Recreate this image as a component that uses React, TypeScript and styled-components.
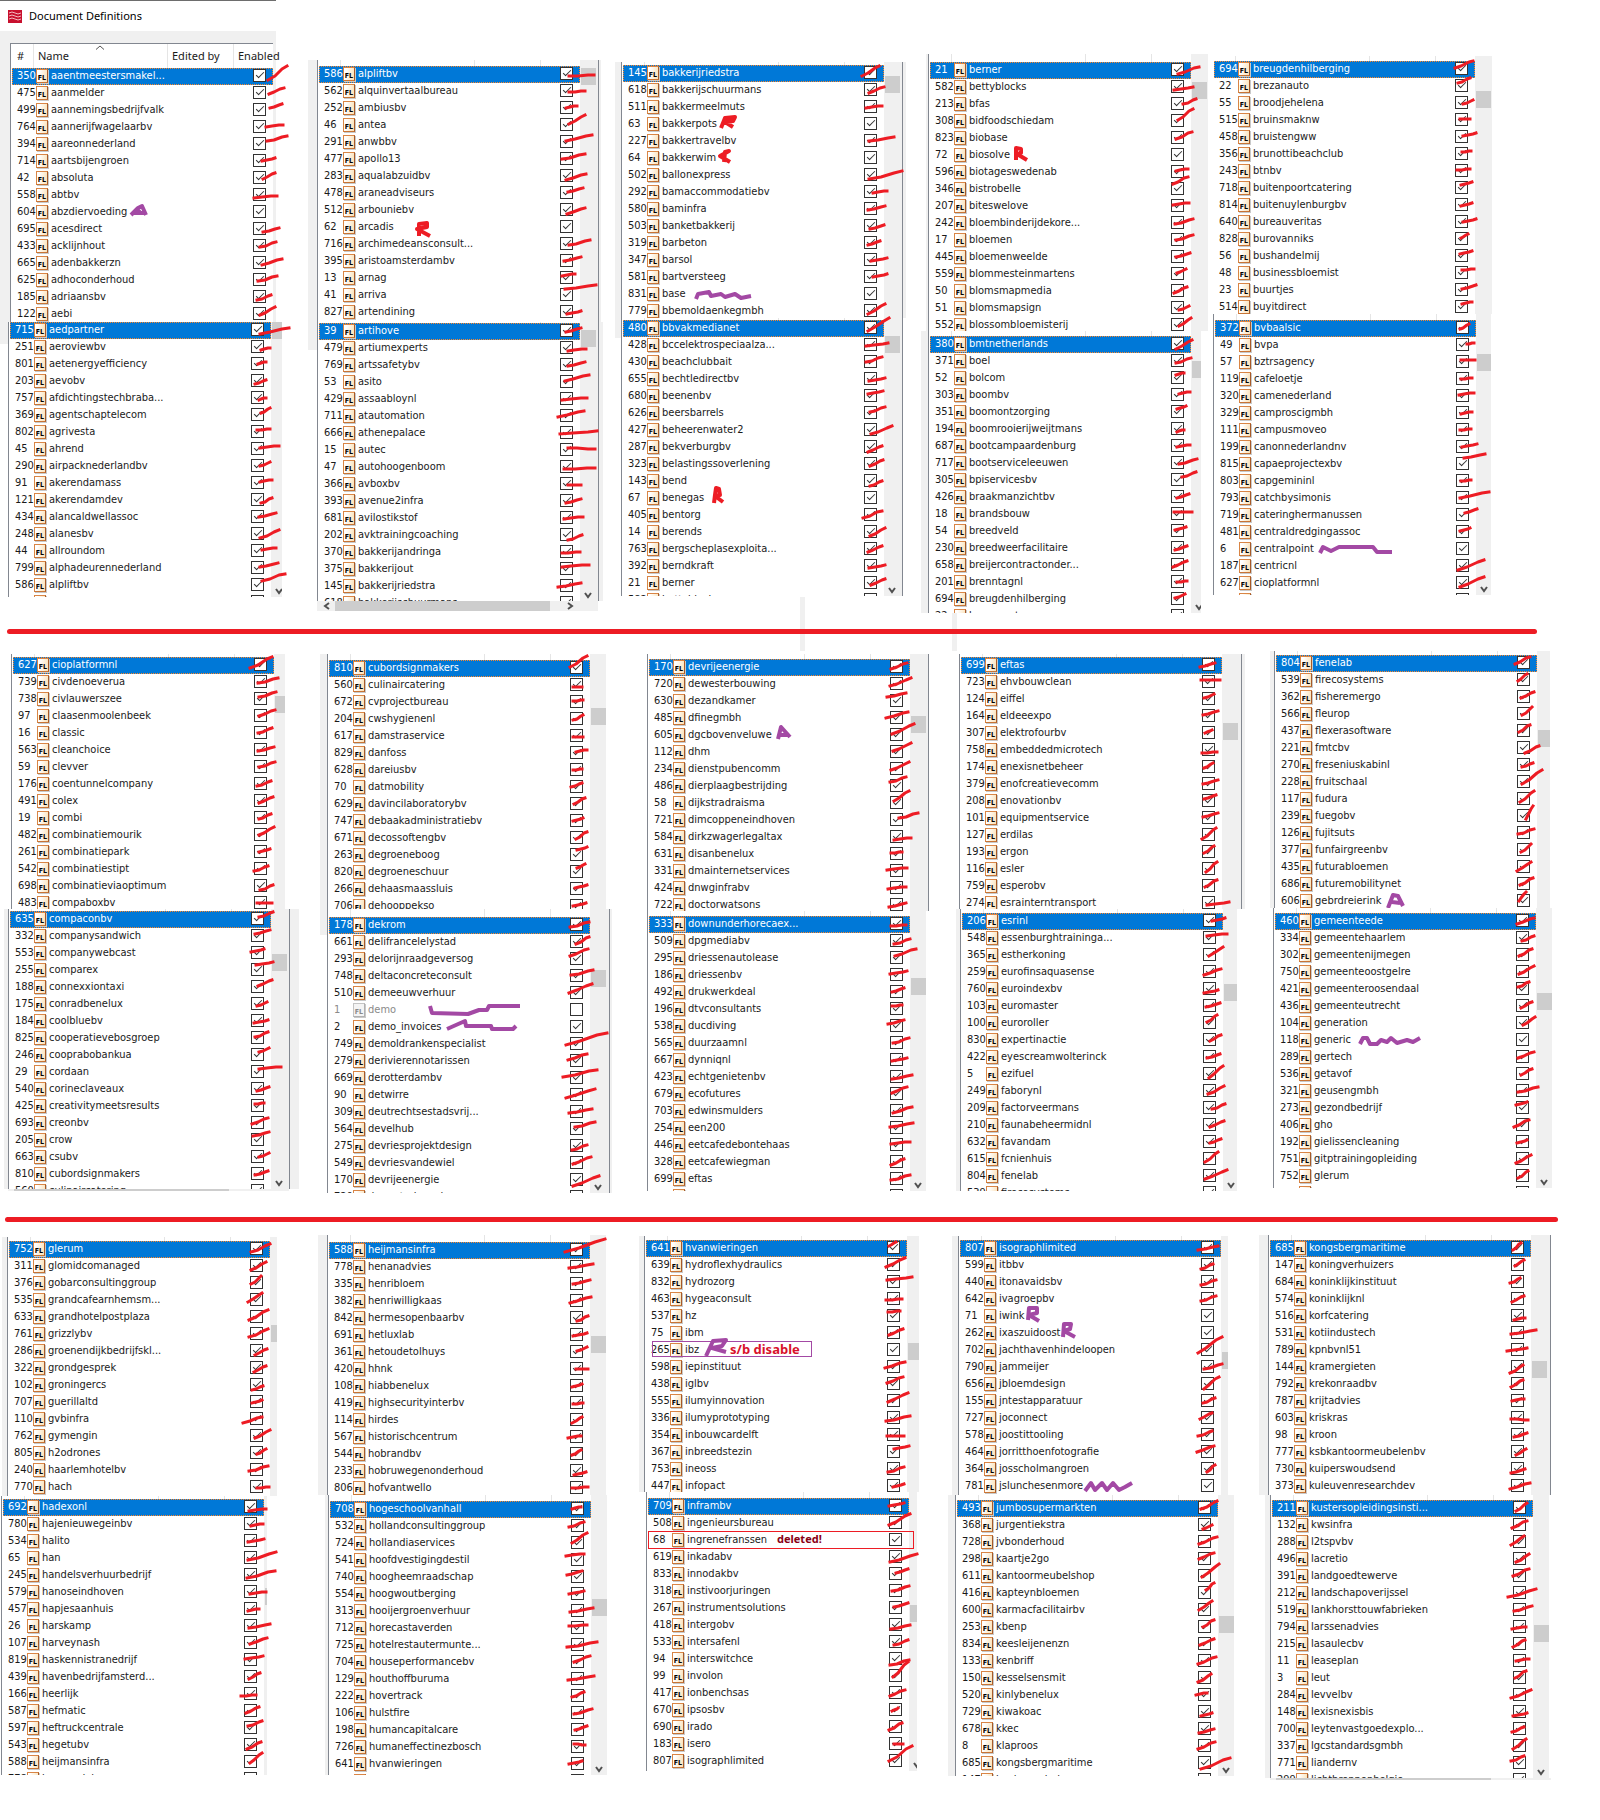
import React from "react";
import styled, { createGlobalStyle, css } from "styled-components";

const face = '"DejaVu Sans Condensed", "DejaVu Sans", "Noto Sans", sans-serif';
const uiFace = '"Noto Sans", "Open Sans", sans-serif';
const pen = "#ed1c24";
const violet = "#a349a4";
const chrome = "#f0f0f0";

const GlobalStyle = createGlobalStyle`
  * { box-sizing: border-box; }
  body { margin: 0; background: #fff; font-family: ${face}; font-size: 11px; color: #1a1a1a; }
`;

const Page = styled.main`
  display: flex;
  flex-direction: column;
  padding-bottom: 40px;
  overflow: hidden;
`;

const Band = styled.section<{ $cols: string; $gap: number }>`
  display: grid;
  grid-template-columns: ${(p) => p.$cols};
  align-items: start;
  margin-top: ${(p) => p.$gap}px;
`;

const Column = styled.div<{ $top: number }>`
  display: flex;
  flex-direction: column;
  align-items: flex-start;
  padding-top: ${(p) => p.$top}px;
`;

const DividerWrap = styled.div<{ $gap: number; $left: number; $right: number }>`
  position: relative;
  padding: ${(p) => p.$gap}px ${(p) => p.$right}px 0 ${(p) => p.$left}px;
`;

const Divider = styled.hr`
  position: relative;
  height: 5px;
  margin: 0;
  border: 0;
  border-radius: 3px;
  background: ${pen};
`;

const Stub = styled.span<{ $left: string; $rise: number }>`
  position: absolute;
  left: ${(p) => p.$left};
  top: ${(p) => -p.$rise}px;
  bottom: -17px;
  width: 5px;
  background: ${chrome};
`;

const TitleBar = styled.header`
  display: flex;
  align-items: center;
  gap: 7px;
  width: 276px;
  height: 31px;
  padding-left: 8px;
  border-top: 1px solid #6d6d6d;
  font: 11px/16px ${uiFace};
  color: #000;
`;

const Title = styled.h1`
  margin: 0;
  font: inherit;
`;

const WindowEdge = styled.div`
  width: 276px;
  height: 12px;
  background: ${chrome};
`;

const Frame = styled.div<{ $inset: number }>`
  display: flex;
  align-items: stretch;
  margin-left: ${(p) => p.$inset}px;
`;

const Gutter = styled.div<{ $w: number; $h?: number }>`
  width: ${(p) => p.$w}px;
  height: ${(p) => (p.$h ? `${p.$h}px` : "auto")};
  background: ${chrome};
`;

const Viewport = styled.div<{ $h: number; $edge: boolean; $top: boolean }>`
  position: relative;
  z-index: 1;
  height: ${(p) => p.$h}px;
  padding-left: 1px;
  border-left: 1px solid ${(p) => (p.$edge ? "#828790" : "transparent")};
  border-top: ${(p) => (p.$top ? "1px solid #828790" : "0")};
  background: #fff;
  clip-path: inset(-8px -50px 0 0);
`;

const Grid = styled.table`
  width: 261px;
  table-layout: fixed;
  border-collapse: separate;
  border-spacing: 0;
  td, th { padding: 0; vertical-align: top; }
`;

const Head = styled.tr<{ $h: number }>`
  height: ${(p) => p.$h}px;
  && th {
    position: relative;
    height: ${(p) => p.$h}px;
    padding-left: 5px;
    font: 11px/24px ${uiFace};
    text-align: left;
    white-space: nowrap;
  }
  th + th { box-shadow: inset 1px 0 0 #e5e5e5; }
`;

const SortCaret = styled.svg`
  position: absolute;
  left: 62px;
  top: 1px;
`;

const Item = styled.tr<{ $selected: boolean; $off: boolean }>`
  position: relative;
  height: 17px;
  line-height: 16px;
  white-space: nowrap;
  ${(p) => p.$selected && css`
    background: #0078d7;
    color: #fff;
    outline: 1px dotted #ff8728;
    outline-offset: -1px;
  `}
  ${(p) => p.$off && css`color: #8a8a8a;`}
`;

const NumberCell = styled.td`
  && { padding-left: 5px; }
`;

const NameCell = styled.td`
  position: relative;
`;

const NameLine = styled.label`
  display: flex;
  align-items: flex-start;
  gap: 3px;
  height: 17px;
  padding-left: 3px;
`;

const Badge = styled.span<{ $off: boolean }>`
  display: flex;
  align-items: flex-end;
  justify-content: flex-end;
  flex: none;
  width: 12px;
  height: 14px;
  margin-top: 1px;
  padding-right: 1px;
  border: 1px solid ${(p) => (p.$off ? "#c4c4c4" : "#d98545")};
  border-right-color: ${(p) => (p.$off ? "#b0b0b0" : "#a85a28")};
  border-bottom-color: ${(p) => (p.$off ? "#b0b0b0" : "#c87434")};
  background: ${(p) => (p.$off ? "#f4f4f4" : "linear-gradient(100deg, #fff 20%, #fbe0b4)")};
  box-shadow: 1px 1px 0 #c9c9c9;
  color: ${(p) => (p.$off ? "#8a8a8a" : "#000")};
  font: bold 7px/7px ${face};
`;

const CheckCell = styled.td`
  position: relative;
  && { padding: 1px 0 0 20px; }
`;

const Tick = styled.input`
  appearance: none;
  display: block;
  position: relative;
  width: 13px;
  height: 13px;
  margin: 0;
  border: 1px solid #333;
  background: #fff;
  &:checked::after {
    content: "";
    position: absolute;
    left: 4px;
    top: 0;
    width: 3px;
    height: 7px;
    border: solid #333;
    border-width: 0 1px 1px 0;
    transform: rotate(45deg);
  }
`;

const Ink = styled.svg<{ $x: number; $y: number }>`
  position: absolute;
  left: ${(p) => p.$x}px;
  top: ${(p) => p.$y}px;
  z-index: 2;
  overflow: visible;
  pointer-events: none;
`;

const Note = styled.strong<{ $w: number; $left: number; $pad: number; $ink: string; $text: string; $size: number; $h: number }>`
  position: absolute;
  z-index: 1;
  top: -1px;
  left: ${(p) => p.$left}px;
  width: ${(p) => p.$w}px;
  height: ${(p) => p.$h}px;
  padding-left: ${(p) => p.$pad}px;
  border: 1px solid ${(p) => p.$ink};
  color: ${(p) => p.$text};
  font: bold ${(p) => p.$size}px/14px ${uiFace};
`;

const Track = styled.div<{ $w: number; $pad: number }>`
  position: relative;
  width: ${(p) => p.$w}px;
  padding: ${(p) => p.$pad}px 0 0 1px;
  background: ${chrome};
  overflow: hidden;
`;

const Thumb = styled.div`
  width: 15px;
  height: 17px;
  background: #cdcdcd;
`;

const Chevron = styled.svg`
  position: absolute;
  left: 4px;
  bottom: 2px;
`;

const RightEdge = styled.div<{ $w: number }>`
  width: ${(p) => p.$w}px;
  border-left: 1px solid #828790;
  background: ${chrome};
`;

const BottomBar = styled.div<{ $h: number; $left: number }>`
  display: flex;
  align-items: center;
  gap: 4px;
  width: 281px;
  height: ${(p) => p.$h}px;
  margin-left: ${(p) => p.$left}px;
  padding-left: 6px;
  background: ${chrome};
  svg { flex: none; }
`;

const BottomThumb = styled.div`
  width: 215px;
  height: 100%;
  margin-right: 12px;
  background: #cdcdcd;
`;

const scribbles: Record<string, [string, string]> = {
  "604": [violet, "M79 11L86 4L90 2L94 11M82 9L92 9M85 6L88 8"],
  "62": [pen, "M60 17L60 5L68 4L68 8L58 10L71 17"],
  "63": [pen, "M58 12L62 2L72 1L70 5L62 6L70 11"],
  "64": [pen, "M61 12L62 2L66 1L57 6L67 12"],
  "831": [violet, "M33 13L35 8L46 6L48 10L58 8L62 11L72 8L78 12L88 10"],
  "67": [pen, "M51 13L52 5L53 -2L56 -1L57 5L52 6L60 12"],
  "72": [pen, "M46 13L46 1L51 2L51 6L47 7L57 13"],
  "6": [violet, "M65 12L68 6L76 10L84 6L118 6L122 11L137 11"],
  "605": [violet, "M89 12L92 0L101 10M89 8L99 8"],
  "1": [violet, "M61 4L63 11L99 12L110 8L118 8L120 4L151 4"],
  "2": [violet, "M78 10L96 2L97 7L122 7L123 10L144 10L147 7"],
  "606": [violet, "M72 15L77 2L82 3L87 13M76 9L84 10"],
  "118": [violet, "M45 12L48 6L52 6L55 12L62 12L66 8L72 10L76 6L82 11L92 8L98 10L105 6"],
  "265": [violet, "M20 14L27 -1L40 -2L36 4L26 6L40 10"],
  "71": [violet, "M28 12L29 0L37 0L37 5L29 7L39 13"],
  "262": [violet, "M63 12L64 -1L71 -1L70 4L64 6L75 12"],
  "781": [violet, "M85 13L91 5L95 12L102 5L107 12L113 5L119 12L125 9L132 5"],
};

type SheetData = {
  inset?: number;
  gutter?: number;
  gutterH?: number;
  edge?: boolean;
  strip: number;
  h: number;
  track: number;
  thumb: number;
  right?: number;
  arrow?: boolean;
  bottom?: number;
  titled?: boolean;
  rows: string;
};

type BandData = { cols: string; gap: number; columns: { top: number; sheets: SheetData[] }[] };

const bands: BandData[] = [
  {
    cols: "308fr 307fr 306fr 287fr 392fr",
    gap: 0,
    columns: [
      {
        top: 0,
        sheets: [
          { gutter: 10, strip: 25, h: 254, track: 3, thumb: -40, titled: true, rows: `
350 aaentmeestersmakel... 15 11 34 -3
475 aanmelder 16 8 31 2
499 aannemingsbedrijfvalk 17 5 29 1
764 aannerijfwagelaarbv 13 7 30 5
394 aareonnederland 14 4 34 -1
714 aartsbijengroen 9 7 22 4
42 absoluta 10 8 22 2
558 abtbv 1 10 24 8
604 abzdiervoeding
695 acesdirect 10 10 26 6
433 acklijnhout 7 8 23 3
665 adenbakkerzn 9 9 29 3
625 adhoconderhoud 5 8 24 3
185 adriaansbv 4 10 18 5
122 aebi 7 8 22 0` },
          { gutter: 8, gutterH: 22, strip: 0, h: 275, track: 11, thumb: 0, arrow: true, rows: `
715 aedpartner 9 11 38 5
251 aeroviewbv 10 10 19 8
801 aetenergyefficiency 7 7 15 5
203 aevobv 4 10 15 6
757 afdichtingstechbraba... 8 9 15 7
369 agentschaptelecom 10 5 19 0
802 agrivesta 6 5 19 4
45 ahrend 9 6 28 4
290 airpacknederlandbv 9 7 19 3
91 akerendamass 9 6 21 4
121 akerendamdev 10 10 21 5
434 alancaldwellassoc 8 7 25 3
248 alanesbv 9 11 28 3
44 allroundom 11 6 25 4
799 alphadeurennederland 9 6 27 2
586 alpliftbv 11 3 34 -4
562 alquinvertaalbureau` },
        ],
      },
      {
        top: 60,
        sheets: [
          { gutter: 9, strip: 6, h: 256, track: 18, thumb: 2, right: 3, rows: `
586 alpliftbv 9 9 34 8
562 alquinvertaalbureau 9 8 25 7
252 ambiusbv 6 7 17 5
46 antea 9 6 25 -3
291 anwbbv 6 6 32 0
477 apollo13 2 7 25 2
283 aqualabzuidbv 6 11 26 5
478 araneadviseurs 8 6 23 2
512 arbouniebv 7 11 25 5
62 arcadis
716 archimedeansconsult... 9 8 30 3
395 aristoamsterdambv 4 7 21 3
13 arnag 2 5 15 3
41 arriva 5 1 36 -3
827 artendining 7 9 21 6` },
          { gutter: 9, gutterH: 28, strip: 1, h: 278, track: 18, thumb: 7, right: 5, arrow: true, bottom: 10, rows: `
39 artihove 6 8 21 4
479 artiumexperts 8 10 26 8
769 artssafetybv 8 8 25 4
53 asito 5 6 29 0
429 assaabloynl 2 8 27 6
711 atautomation -2 8 24 2
666 athenepalace 0 8 37 5
15 autec 8 5 35 6
47 autohoogenboom 4 9 35 8
366 avboxbv 8 8 21 8
393 avenue2infra 6 9 21 5
681 avilostikstof 4 8 23 6
202 avktrainingcoaching 8 12 22 7
370 bakkerijandringa 2 8 20 7
375 bakkerijout 2 5 29 3
145 bakkerijriedstra -2 8 21 4
618 bakkerijschuurmans` },
        ],
      },
      {
        top: 62,
        sheets: [
          { gutter: 6, strip: 3, h: 253, track: 18, thumb: 11, right: 4, rows: `
145 bakkerijriedstra -2 10 15 0
618 bakkerijschuurmans 5 10 20 4
511 bakkermeelmuts 2 8 18 6
63 bakkerpots
227 bakkertravelbv 5 7 30 3
64 bakkerwim
502 ballonexpress 5 11 38 3
292 bamaccommodatiebv 9 8 23 6
580 baminfra 4 8 21 4
503 banketbakkerij 6 10 20 6
319 barbeton 4 9 16 5
347 barsol 7 8 23 5
581 bartversteeg 9 7 23 4
831 base
779 bbemoldaenkegmbh 4 10 21 0` },
          { gutter: 6, gutterH: 20, strip: 2, h: 276, track: 18, thumb: 16, right: 1, arrow: true, rows: `
480 bbvakmedianet 4 10 25 -3
428 bccelektrospeciaalza... 2 8 24 5
430 beachclubbait 2 7 18 2
655 bechtledirectbv 5 9 21 6
680 beenenbv 4 5 19 2
626 beersbarrels 6 6 21 1
427 beheerenwater2 7 11 28 3
287 bekverburgbv 4 12 18 6
323 belastingssoverlening 6 9 19 3
143 bend 6 12 18 7
67 benegas
405 bentorg -1 10 18 3
14 berends 6 11 21 3
763 bergscheplasexploita... 4 10 18 4
392 berndkraft 5 9 21 6
21 berner 7 9 21 3
582 bettyblocks` },
        ],
      },
      {
        top: 54,
        sheets: [
          { inset: 5, gutter: 2, strip: 8, h: 269, track: 17, thumb: 20, rows: `
21 berner 7 11 28 4
582 bettyblocks 3 10 22 7
213 bfas 12 7 25 2
308 bidfoodschiedam 7 6 22 -5
823 biobase 5 8 21 1
72 biosolve
596 biotageswedenab 5 6 17 4
346 bistrobelle 2 2 17 -5
207 biteswelove 2 6 18 4
242 bloembinderijdekore... 4 8 22 3
17 bloemen 5 7 22 2
445 bloemenweelde 5 7 19 3
559 blommesteinmartens 6 6 15 2
50 blomsmapmedia 3 9 16 3
51 blomsmapsign 8 9 18 5
552 blossombloemisterij 8 8 20 0` },
          { gutter: 7, strip: 5, h: 277, track: 10, thumb: 25, arrow: true, rows: `
380 bmtnetherlands 5 12 21 3
371 boel 5 9 20 4
52 bolcom 5 4 13 2
303 boombv 8 6 19 4
351 boomontzorging 6 4 15 1
194 boomrooierijweijtmans 6 10 13 8
687 bootcampaardenburg 6 8 19 6
717 bootserviceleeuwen 8 8 26 3
305 bpiservicesbv 11 4 25 -1
426 braakmanzichtbv 6 8 18 4
18 brandsbouw 3 5 21 5
54 breedveld 4 6 15 3
230 breedweerfacilitaire 4 9 16 5
658 breijercontractonder... 2 9 16 3
201 brenntagnl 6 7 16 6
694 breugdenhilberging 4 6 14 2
22 brezanauto` },
        ],
      },
      {
        top: 56,
        sheets: [
          { inset: 4, edge: false, strip: 5, h: 253, track: 17, thumb: 30, rows: `
694 breugdenhilberging 0 6 18 -1
22 brezanauto 3 4 15 -1
55 broodjehelena 8 8 18 4
515 bruinsmaknw 5 6 15 6
458 bruistengww 8 6 21 3
356 brunottibeachclub 7 5 16 4
243 btnbv 2 6 15 5
718 buitenpoortcatering 6 4 17 1
814 buitenuylenburgbv 6 8 17 5
640 bureauveritas 8 7 21 4
828 burovanniks 6 6 13 2
56 bushandelmij 5 5 17 2
48 businessbloemist 7 4 19 3
23 buurtjes 7 6 21 2
514 buyitdirect 7 4 17 2` },
          { inset: 5, strip: 6, h: 275, track: 15, thumb: 34, arrow: true, rows: `
372 bvbaalsic 4 8 13 3
49 bvpa 11 6 18 5
57 bztrsagency 5 5 19 5
119 cafeloetje 5 7 16 6
320 camenederland 3 6 18 4
329 camproscigmbh 5 8 16 6
111 campusmoveo 4 7 15 6
199 canonnederlandnv 6 7 21 4
815 capaeprojectexbv 8 1 29 -3
803 capgemininl 5 7 15 6
793 catchbysimonis 4 7 33 1
719 cateringhermanussen 9 5 21 1
481 centraldredgingassoc 4 6 14 3
6 centralpoint
187 centricnl 2 11 28 1
627 cioplatformnl 4 11 28 1
739 civdenoeverua` },
        ],
      },
    ],
  },
  {
    cols: "320fr 320fr 311fr 312fr 337fr",
    gap: 17,
    columns: [
      {
        top: 3,
        sheets: [
          { inset: 11, strip: 3, h: 252, track: 11, thumb: 39, rows: `
627 cioplatformnl -4 10 18 -1
739 civdenoeverua 4 8 24 3
738 civlauwerszee 5 5 22 0
97 claasenmoolenbeek 5 7 21 1
16 classic 4 7 18 2
563 cleanchoice 4 8 20 4
59 clevver 5 7 21 2
176 coentunnelcompany 3 9 17 4
491 colex 5 9 19 3
19 combi 5 8 17 3
482 combinatiemourik 5 7 20 -1
261 combinatiepark 5 7 16 4
542 combinatiestipt 0 9 14 4
698 combinatieviaoptimum 6 11 19 6
483 compaboxbv 3 7 18 7` },
          { inset: 4, gutter: 4, strip: 2, h: 278, track: 18, thumb: 43, right: 10, arrow: true, bottom: 2, rows: `
635 compaconbv 8 5 22 0
332 companysandwich 4 5 19 1
553 companywebcast 0 6 13 3
255 comparex 5 2 22 -1
188 connexxiontaxi 7 6 21 0
175 conradbenelux 6 9 16 5
184 coolbluebv 3 9 17 6
825 cooperatievebosgroep 4 6 17 1
246 cooprabobankua 8 4 18 0
29 cordaan 8 4 30 2
540 corineclaveaux 6 9 18 5
425 creativitymeetsresults 4 5 13 4
693 creonbv 1 8 17 2
205 crow 2 3 18 -1
663 csubv 8 7 18 3
810 cubordsignmakers 4 8 17 4
560 culinaircatering` },
        ],
      },
      {
        top: 3,
        sheets: [
          { gutter: 7, strip: 6, h: 249, track: 16, thumb: 48, rows: `
810 cubordsignmakers 0 6 17 -5
560 culinaircatering 3 9 12 9
672 cvprojectbureau 3 6 13 5
204 cwshygienenl 3 8 13 3
617 damstraservice 3 8 13 8
829 danfoss 6 6 17 4
628 dareiusbv 3 7 12 6
70 datmobility 1 7 12 3
629 davincilaboratorybv 4 7 15 1
747 debaakadministratiebv 3 7 13 4
671 decossoftengbv 6 8 17 1
263 degroeneboog 7 2 17 -1
820 degroeneschuur 7 3 15 -1
266 dehaasmaassluis 5 6 17 3
706 dehooppekso 3 7 16 4` },
          { gutter: 7, gutterH: 26, strip: 8, h: 276, track: 19, thumb: 53, right: 3, arrow: true, rows: `
178 dekrom 0 9 19 4
661 delifrancelelystad 6 9 19 2
293 delorijnraadgeversog 0 4 18 -3
748 deltaconcreteconsult 1 6 23 1
510 demeeuwverhuur -1 7 22 -2
1 demo
2 demo_invoices
749 demoldrankenspecialist -4 8 37 -4
279 derivierennotarissen -2 6 17 0
669 derotterdambv -7 6 27 -1
90 detwirre -4 10 25 1
309 deutrechtsestadsvrij... -1 8 22 4
564 develhub 5 5 25 0
275 devriesprojektdesign 2 11 17 6
549 devriesvandewiel 3 8 21 1
170 devrijeenergie 3 13 29 3
720 dewesterbouwing` },
        ],
      },
      {
        top: 3,
        sheets: [
          { inset: 7, strip: 5, h: 252, track: 18, thumb: 57, right: 1, rows: `
170 devrijeenergie 1 9 17 3
720 dewesterbouwing 0 9 21 1
630 dezandkamer -3 3 16 -1
485 dfinegmbh -4 7 18 1
605 dgcbovenveluwe 2 6 24 -4
112 dhm 3 6 21 -2
234 dienstpubencomm 1 8 19 0
486 dierplaagbestrijding 0 3 16 -2
58 dijkstradraisma 4 5 19 -5
721 dimcoppeneindhoven 9 5 28 0
584 dirkzwagerlegaltax 4 10 21 8
631 disanbenelux 1 6 12 5
331 dmainternetservices -3 6 17 4
424 dnwginfrabv -2 8 16 6
722 doctorwatsons -1 9 16 5` },
          { inset: 7, strip: 5, h: 275, track: 16, thumb: 62, arrow: true, rows: `
333 downunderhorecaex... 1 9 16 8
509 dpgmediabv 4 10 20 5
295 driessenautolease 5 5 26 -2
186 driessenbv 0 6 17 3
492 drukwerkdeal 2 7 14 3
196 dtvconsultants 2 4 12 3
538 ducdiving -2 5 14 1
565 duurzaamnl 3 7 19 2
667 dynniqnl 2 8 17 5
423 echtgenietenbv 2 9 22 5
679 ecofutures 2 6 17 0
703 edwinsmulders 3 9 22 3
254 een200 0 6 23 2
446 eetcafedebontehaas 1 6 20 4
328 eetcafewiegman 1 10 14 4
699 eftas 1 8 20 3
723 ehvbouwclean` },
        ],
      },
      {
        top: 3,
        sheets: [
          { inset: 8, strip: 3, h: 252, track: 19, thumb: 66, right: 4, rows: `
699 eftas -2 9 13 5
723 ehvbouwclean -1 5 18 5
124 eiffel 2 6 12 2
164 eldeeexpo 1 6 16 2
307 elektrofourbv 3 7 10 4
758 embeddedmicrotech 0 10 15 9
174 enexisnetbeheer 2 8 11 3
379 enofcreatievecomm 1 7 16 3
208 enovationbv 2 5 14 1
101 equipmentservice 1 6 16 2
127 erdilas 0 11 14 0
193 ergon 2 8 12 1
116 esler 4 10 15 0
759 esperobv 3 8 15 1
274 esrainterntransport 5 9 27 6` },
          { inset: 5, gutter: 4, strip: 4, h: 278, track: 14, thumb: 71, arrow: true, rows: `
206 esrinl 9 7 22 4
548 essenburghtraininga... 4 5 24 3
365 estherkoning 6 8 20 -1
259 eurofinsaquasense 1 10 18 4
760 euroindexbv 1 11 15 8
103 euromaster 3 8 17 4
100 euroroller 4 6 14 -1
830 expertinactie 7 8 18 2
422 eyescreamwolterinck 4 8 17 4
5 ezifuel 6 11 20 -1
249 faborynl 5 10 21 2
209 factorveermans 9 8 22 3
210 faunabeheermidnl 7 9 21 3
632 favandam 7 8 18 4
615 fcnienhuis 2 10 15 0
804 fenelab 2 10 24 1
539 firecosystems` },
        ],
      },
      {
        top: 0,
        sheets: [
          { inset: 7, gutter: 4, strip: 4, h: 253, track: 13, thumb: 75, rows: `
804 fenelab -2 8 13 1
539 firecosystems 1 8 10 1
362 fisheremergo 4 8 17 2
566 fleurop 5 8 15 0
437 flexerasoftware 2 8 13 1
221 fmtcbv 8 12 22 5
270 freseniuskabinl 5 9 16 5
228 fruitschaal 5 9 25 -5
117 fudura 3 10 17 -1
239 fuegobv 9 10 16 -3
126 fujitsuts 1 8 17 3
377 funfairgreenbv 4 9 14 1
435 futurabloemen 0 11 14 2
686 futuremobilitynet 3 8 16 1
606 gebrdreierink 2 7 9 -2` },
          { inset: 10, strip: 5, h: 275, track: 16, thumb: 80, arrow: true, rows: `
460 gemeenteede 1 10 18 4
334 gemeentehaarlem 6 10 18 5
302 gemeentenijmegen 3 8 16 1
750 gemeenteoostgelre 3 9 18 1
421 gemeenteroosendaal 2 5 13 0
436 gemeenteutrecht 5 9 16 3
104 generation 7 9 19 1
118 generic
289 gertech 2 8 18 2
536 getavof 5 8 16 2
321 geusengmbh 2 8 22 3
273 gezondbedrijf 0 4 11 1
406 gho -2 9 13 2
192 gielissencleaning 1 8 11 5
751 gitptrainingopleiding 0 11 15 3
752 glerum 2 9 12 2
311 glomidcomanaged` },
        ],
      },
    ],
  },
  {
    cols: "318fr 321fr 309fr 311fr 341fr",
    gap: 13,
    columns: [
      {
        top: 2,
        sheets: [
          { inset: 2, gutter: 5, strip: 4, h: 255, track: 7, thumb: 84, rows: `
752 glerum 1 10 20 2
311 glomidcomanaged 1 11 16 3
376 gobarconsultinggroup 1 8 11 0
535 grandcafearnhemsm... -2 9 12 0
633 grandhotelpostplaza -1 10 18 0
761 grizzlybv -1 10 18 2
286 groenendijkbedrijfskl... 5 11 17 5
322 grondgesprek 4 11 16 5
102 groningercs 2 12 13 8
707 guerillaltd 2 8 12 5
110 gvbinfra -7 11 12 5
762 gymengin 5 9 20 1
805 h2odrones 7 8 16 3
240 haarlemhotelbv -1 8 18 3
770 hach 7 8 19 7` },
          { inset: 1, strip: 3, h: 276, track: 3, thumb: 89, rows: `
692 hadexonl 5 11 22 9
780 hajenieuwegeinbv 7 9 19 7
534 halito 4 8 20 5
65 han 4 9 32 1
245 handelsverhuurbedrijf 3 10 31 3
579 hanoseindhoven 6 9 22 7
457 hapjesaanhuis 4 9 15 7
26 harskamp 5 9 26 5
107 harveynash 6 8 23 2
819 haskennistranedrijf 1 6 19 3
439 havenbedrijfamsterd... 5 9 16 3
166 heerlijk -3 9 12 8
587 hefmatic 2 9 15 3
597 heftruckcentrale 4 5 18 0
543 hegetubv 3 11 17 4
588 heijmansinfra 6 8 18 -2
778 henanadvies` },
        ],
      },
      {
        top: 0,
        sheets: [
          { gutter: 9, strip: 7, h: 253, track: 16, thumb: 94, rows: `
588 heijmansinfra -5 9 35 -4
778 henanadvies -1 8 23 4
335 henribloem 3 7 20 3
382 henriwilligkaas 0 9 21 3
842 hermesopenbaarbv 7 10 18 5
691 hetluxlab 3 8 17 5
361 hetoudetolhuys 7 6 17 2
420 hhnk 6 7 18 7
108 hiabbenelux 2 8 12 5
419 highsecurityinterbv 3 8 13 7
114 hirdes 2 10 12 4
567 historischcentrum -2 8 11 6
544 hobrandbv 2 8 11 3
233 hobruwegenonderhoud 4 11 16 8
806 hofvantwello 2 7 18 6` },
          { inset: 7, gutter: 3, strip: 6, h: 274, track: 16, thumb: 98, arrow: true, rows: `
708 hogeschoolvanhall 1 7 10 5
532 hollandconsultinggroup -2 8 13 3
724 hollandiaservices 1 7 16 -3
541 hoofdvestigingdestil -5 3 13 1
740 hoogheemraadschap -4 5 11 1
554 hoogwoutberging -2 7 13 4
313 hooijergroenverhuur -1 8 22 4
712 horecastaverden -2 5 16 4
725 hotelrestautermunte... -4 9 26 4
704 houseperformancebv 3 7 19 1
129 houthoffburuma -3 8 23 4
222 hovertrack 1 8 13 3
106 hulstfire 3 8 21 3
198 humancapitalcare 4 7 16 3
726 humaneffectinezbosch 3 4 14 5
641 hvanwieringen -2 7 11 4
639 hydroflexhydraulics` },
        ],
      },
      {
        top: 1,
        sheets: [
          { gutter: 5, strip: 4, h: 252, track: 12, thumb: 103, rows: `
641 hvanwieringen 2 5 9 1
639 hydroflexhydraulics -1 9 18 0
832 hydrozorg 0 5 25 2
463 hygeaconsult -1 8 15 7
537 hz 1 3 13 2
75 ibm 2 9 16 3
265 ibz
598 iepinstituut -2 8 18 2
438 iglbv 0 6 16 0
555 ilumyinnovation 1 8 21 -1
336 ilumyprototyping -1 10 23 5
354 inbouwcardelft 0 8 17 8
367 inbreedstezin 7 4 22 1
753 ineoss 1 10 17 5
447 infopact 6 8 17 5` },
          { inset: 7, strip: 6, h: 273, track: 8, thumb: 107, arrow: true, rows: `
709 inframbv 0 7 15 4
508 ingenieursbureau 0 9 21 -2
68 ingrenefranssen
619 inkadabv 1 12 28 4
833 innodakbv 7 6 19 2
318 instivoorjuringen 3 7 20 2
267 instrumentsolutions 5 6 19 2
418 intergobv 2 11 21 7
533 intersafenl 5 10 19 5
94 interswitchce 1 13 20 8
99 involon 4 8 19 -7
417 ionbenchsas 1 10 16 4
670 ipsosbv 3 8 9 5
690 irado 0 10 13 3
183 isero 5 7 14 7
807 isographlimited 0 7 23 -8
599 itbbv` },
        ],
      },
      {
        top: 1,
        sheets: [
          { inset: 4, gutter: 6, strip: 4, h: 255, track: 7, thumb: 112, rows: `
807 isographlimited -3 9 17 5
599 itbbv 0 11 12 6
440 itonavaidsbv 0 10 15 5
642 ivagroepbv 0 9 15 4
71 iwink
262 ixaszuidoost
702 jachthavenhindeloopen -3 10 21 -6
790 jammeijer 3 9 21 4
656 jbloemdesign 3 12 18 0
155 jntestapparatuur 2 9 14 4
727 joconnect -1 8 11 2
578 joostittooling -3 8 11 3
464 jorritthoenfotografie -4 7 13 1
364 josscholmangroen 6 10 14 3
781 jslunchesenmore` },
          { gutter: 7, strip: 5, h: 276, track: 16, thumb: 116, arrow: true, rows: `
493 jumbosupermarkten 3 8 19 0
368 jurgentiekstra 5 11 14 7
728 jvbonderhoud 1 9 19 2
298 kaartje2go 1 7 16 1
611 kantoormeubelshop 4 8 21 -5
416 kapteynbloemen 8 4 16 -3
600 karmacfacilitairbv 1 7 14 -2
253 kbenp 5 7 16 0
834 keesleijenenzn 2 8 16 2
133 kenbriff 0 10 18 3
150 kesselsensmit 0 11 13 3
520 kinlybenelux -2 7 9 5
729 kiwakoac 3 11 14 8
678 kkec 1 11 16 7
8 klaproos 0 10 17 3
685 kongsbergmaritime 3 13 32 2
147 koningverhuizers` },
        ],
      },
      {
        top: 0,
        sheets: [
          { gutter: 9, strip: 5, h: 255, track: 19, thumb: 121, right: 1, rows: `
685 kongsbergmaritime 2 9 10 2
147 koningverhuizers 4 8 13 2
684 koninklijkinstituut -1 8 9 3
574 koninklijknl 1 10 13 4
516 korfcatering 3 11 14 9
531 kotiindustech 0 8 25 4
789 kpnbvnl51 -4 8 16 5
144 kramergieten -1 13 12 5
792 krekonraadbv 0 10 12 3
787 krijtadvies 1 7 13 5
603 kriskras 0 8 17 9
98 kroon 3 9 16 5
777 ksbkantoormeubelenbv 5 10 15 4
730 kuiperswoudsend 0 11 14 7
373 kuleuvenresearchdev -1 10 19 4` },
          { inset: 6, gutter: 5, strip: 5, h: 278, track: 16, thumb: 125, arrow: true, bottom: 2, rows: `
211 kustersopleidingsinsti... 3 10 14 2
132 kwsinfra -1 10 14 3
288 l2tspvbv -2 10 11 1
496 lacretio 3 10 16 2
391 landgoedtewerve 0 7 16 0
212 landschapoverijssel -5 11 23 3
519 lankhorsttouwfabrieken 1 8 19 3
794 larssenadvies -1 9 13 7
215 lasaulecbv 0 10 12 3
11 leaseplan 3 7 16 5
3 leut 2 7 13 0
284 levvelbv -2 10 18 2
148 lexisnexisbis 0 11 14 8
700 leytenvastgoedexplo... -1 10 11 5
337 lgcstandardsgmbh 0 10 13 0
771 liandernv -2 5 11 0
299 lichtbronnenbelgie` },
        ],
      },
    ],
  },
];

function Stroke({ points }: { points: number[] }) {
  const [x1, y1, x2, y2] = points;
  const dx = x2 - x1;
  const dy = y2 - y1;
  const d = `M${x1} ${y1}L${x1 + Math.round(dx * 0.35)} ${y1 + Math.round(dy * 0.3)}L${x1 + Math.round(dx * 0.75)} ${y1 + Math.round(dy * 0.8)}L${x2} ${y2}`;
  return (
    <Ink $x={20} $y={1} width="13" height="13" aria-hidden="true">
      <path d={d} fill="none" stroke={pen} strokeWidth="3" strokeLinejoin="round" strokeLinecap="square" />
    </Ink>
  );
}

function Row({ line, first, id }: { line: string; first: boolean; id: string }) {
  const [num, name, ...rest] = line.split(" ");
  const points = rest.map(Number);
  const off = name === "demo";
  const scribble = scribbles[num];
  return (
    <Item $selected={first} $off={off}>
      <NumberCell>{num}</NumberCell>
      <NameCell>
        <NameLine htmlFor={id}>
          <Badge $off={off} aria-hidden="true">FL</Badge>
          {name}
        </NameLine>
        {scribble && (
          <Ink $x={19} $y={0} width="90" height="17" aria-hidden="true">
            <path d={scribble[1]} fill="none" stroke={scribble[0]} strokeWidth="4" strokeLinejoin="round" />
          </Ink>
        )}
        {name === "ibz" && (
          <Note $left={-15} $w={160} $h={16} $pad={77} $ink={violet} $text="#d8122c" $size={13}>s/b disable</Note>
        )}
        {name === "ingrenefranssen" && (
          <Note $left={-21} $w={266} $h={18} $pad={128} $ink={pen} $text="#880015" $size={11}>deleted!</Note>
        )}
      </NameCell>
      <td />
      <CheckCell>
        <Tick type="checkbox" id={id} defaultChecked={!off} />
        {points.length === 4 && <Stroke points={points} />}
      </CheckCell>
    </Item>
  );
}

function Sheet({ data, id }: { data: SheetData; id: string }) {
  const rows = data.rows.trim().split("\n");
  const wideBar = (data.bottom ?? 0) > 4;
  return (
    <>
      <Frame $inset={data.inset ?? 0}>
        {data.gutter && <Gutter $w={data.gutter} $h={data.gutterH} />}
        <Viewport $h={data.strip + data.h} $edge={data.edge ?? true} $top={!!data.titled}>
          <Grid>
            <colgroup>
              <col width="21" />
              <col width="134" />
              <col width="66" />
              <col width="40" />
            </colgroup>
            {data.strip > 0 && (
              <thead>
                <Head $h={data.titled ? data.strip - 1 : data.strip}>
                  <th>{data.titled && "#"}</th>
                  <th>
                    {data.titled && (
                      <>
                        Name
                        <SortCaret width="10" height="5" viewBox="0 0 10 5" fill="none" stroke="#555">
                          <path d="M1 4.5L5 1L9 4.5" />
                        </SortCaret>
                      </>
                    )}
                  </th>
                  <th>{data.titled && "Edited by"}</th>
                  <th>{data.titled && "Enabled"}</th>
                </Head>
              </thead>
            )}
            <tbody>
              {rows.map((line, i) => (
                <Row key={line} line={line} first={i === 0} id={`${id}-${i}`} />
              ))}
            </tbody>
          </Grid>
        </Viewport>
        <Track $w={data.track} $pad={Math.max(0, data.thumb + data.strip)}>
          {data.thumb >= 0 && <Thumb />}
          {data.arrow && (
            <Chevron width="8" height="8" viewBox="0 0 8 8" fill="none" stroke="#505050" strokeWidth="2">
              <path d="M1 2L4 6L7 2" />
            </Chevron>
          )}
        </Track>
        {data.right && <RightEdge $w={data.right} />}
      </Frame>
      {data.bottom && (
        <BottomBar $h={data.bottom} $left={(data.inset ?? 0) + (data.gutter ?? 0)}>
          {wideBar && (
            <svg width="8" height="8" viewBox="0 0 8 8" fill="none" stroke="#505050" strokeWidth="2"><path d="M6 1L2 4L6 7" /></svg>
          )}
          <BottomThumb />
          {wideBar && (
            <svg width="8" height="8" viewBox="0 0 8 8" fill="none" stroke="#505050" strokeWidth="2"><path d="M2 1L6 4L2 7" /></svg>
          )}
        </BottomBar>
      )}
    </>
  );
}

function BandView({ band, index }: { band: BandData; index: number }) {
  return (
    <Band $cols={band.cols} $gap={band.gap}>
      {band.columns.map((col, c) => (
        <Column key={c} $top={col.top}>
          {index === 0 && c === 0 && (
            <>
              <TitleBar>
                <svg width="14" height="13" viewBox="0 0 14 13">
                  <rect width="14" height="13" fill="#c8102e" />
                  <path d="M1 3Q4 1 7 3T13 3M1 6Q4 4 7 6T13 6M1 9Q4 7 7 9T13 9" fill="none" stroke="#f3b9c1" />
                </svg>
                <Title>Document Definitions</Title>
              </TitleBar>
              <WindowEdge />
            </>
          )}
          {col.sheets.map((s, i) => (
            <Sheet key={i} data={s} id={`b${index}c${c}s${i}`} />
          ))}
        </Column>
      ))}
    </Band>
  );
}

export default function App() {
  return (
    <Page>
      <GlobalStyle />
      <BandView band={bands[0]} index={0} />
      <DividerWrap $gap={16} $left={7} $right={63}>
        <Stub $left="50%" $rise={16} />
        <Stub $left="59.5%" $rise={0} />
        <Divider />
      </DividerWrap>
      <BandView band={bands[1]} index={1} />
      <DividerWrap $gap={24} $left={5} $right={42}>
        <Divider />
      </DividerWrap>
      <BandView band={bands[2]} index={2} />
    </Page>
  );
}
